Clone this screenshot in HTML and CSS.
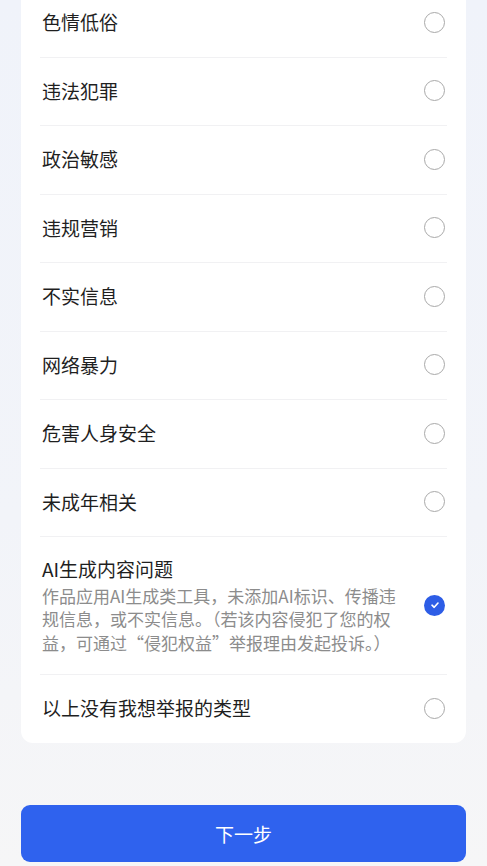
FILE: index.html
```html
<!DOCTYPE html>
<html lang="zh-CN">
  <head>
    <meta charset="UTF-8" />
    <meta name="viewport" content="width=device-width, initial-scale=1.0" />
    <title>举报</title>
    <link rel="stylesheet" href="styles.css">
  </head>
  <body>
    <section class="page">
      <ul class="card">
        <li class="row"><span class="label">色情低俗</span><span class="radio"></span></li>
        <li class="row"><span class="label">违法犯罪</span><span class="radio"></span></li>
        <li class="row"><span class="label">政治敏感</span><span class="radio"></span></li>
        <li class="row"><span class="label">违规营销</span><span class="radio"></span></li>
        <li class="row"><span class="label">不实信息</span><span class="radio"></span></li>
        <li class="row"><span class="label">网络暴力</span><span class="radio"></span></li>
        <li class="row"><span class="label">危害人身安全</span><span class="radio"></span></li>
        <li class="row"><span class="label">未成年相关</span><span class="radio"></span></li>
        <li class="row row-tall">
          <div class="text">
            <div class="label">AI生成内容问题</div>
            <p class="desc">作品应用AI生成类工具，未添加AI标识、传播违规信息，或不实信息。（若该内容侵犯了您的权益，可通过“侵犯权益”举报理由发起投诉。）</p>
          </div>
          <span class="radio checked">
            <svg width="10" height="10" viewBox="0 0 10 10"><path d="M2 5.2 L4.2 7.3 L8 3" fill="none" stroke="#fff" stroke-width="1.6" stroke-linecap="round" stroke-linejoin="round"/></svg>
          </span>
        </li>
        <li class="row"><span class="label">以上没有我想举报的类型</span><span class="radio"></span></li>
      </ul>

      <button type="button" class="next">下一步</button>
    </section>
  </body>
</html>
```

FILE: styles.css
```css
body {
  margin: 0;
  padding: 0;
  font-family: "Noto Sans CJK SC", "Noto Sans", sans-serif;
  background: linear-gradient(180deg, #f0f3fa 0%, #f2f4f9 60%, #f6f6f7 100%);
  height: 866px;
  overflow: hidden;
}

.page {
  padding: 0 21px;
}

.card {
  list-style: none;
  margin: -12px 0 0 0;
  padding: 0;
  background-color: #fff;
  border-radius: 12px;
}

.row {
  display: flex;
  align-items: center;
  justify-content: space-between;
  height: 68.5px;
  padding: 0 21px;
  position: relative;
}

.row + .row::before {
  content: "";
  position: absolute;
  top: 0;
  left: 19px;
  right: 19px;
  height: 1px;
  background-color: #f1f1f3;
}

.row-tall {
  height: 138px;
}

.label {
  font-size: 19px;
  color: #1f1f1f;
  line-height: 26px;
}

.text {
  width: 362px;
}

.desc {
  margin: 2px 0 0 0;
  font-size: 17px;
  line-height: 23.5px;
  color: #8c8c8c;
}

.radio {
  box-sizing: border-box;
  width: 21px;
  height: 21px;
  border: 1.6px solid #a9a9a9;
  border-radius: 50%;
  flex-shrink: 0;
  display: flex;
  align-items: center;
  justify-content: center;
}

.radio.checked {
  border: none;
  background-color: #2d5de6;
}

.next {
  display: block;
  width: 100%;
  height: 57px;
  margin-top: 62px;
  border: none;
  border-radius: 9px;
  background-color: #2f62ee;
  color: #fff;
  font-family: "Noto Sans CJK SC", sans-serif;
  font-size: 19px;
}
```
